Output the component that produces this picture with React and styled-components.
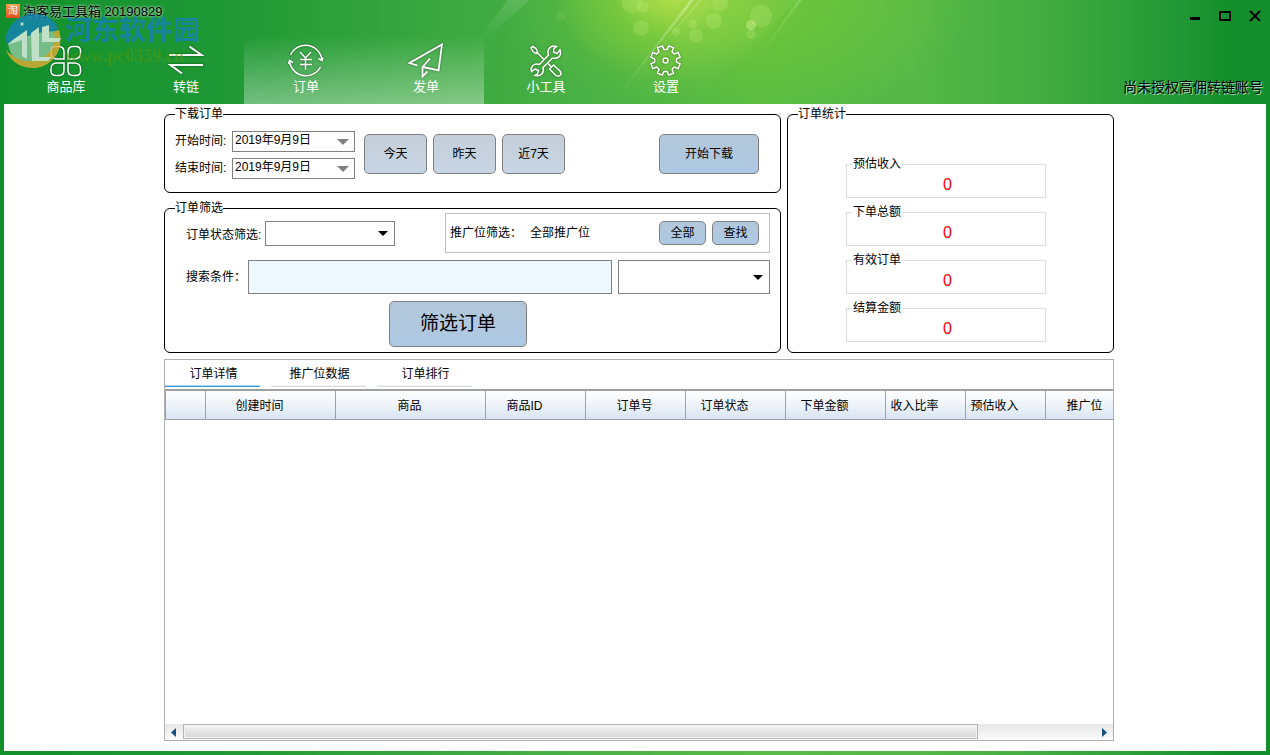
import React, { useState } from 'react';
import styled, { createGlobalStyle, css } from 'styled-components';

const GlobalStyle = createGlobalStyle`
  * {
    box-sizing: border-box;
  }
  body {
    margin: 0;
    color: #000;
    font: 12px/15px 'Liberation Sans', 'Noto Sans CJK SC', sans-serif;
  }
  button, input, select {
    margin: 0;
    font: inherit;
    color: inherit;
  }
`;

const Window = styled.div`
  display: flex;
  flex-direction: column;
  min-height: 100vh;
  padding-bottom: 4px;
  background: linear-gradient(
    90deg,
    #12902c 0%,
    #1e9834 17%,
    #3aa740 34%,
    #4ab146 46%,
    #58bb44 60%,
    #56b848 72%,
    #42ac40 82%,
    #279b38 91%,
    #128f2c 97%,
    #128f2c 100%
  );
`;

/* header */

const Header = styled.header`
  position: relative;
  background: radial-gradient(
      ellipse 120px 90px at 53% -8%,
      rgba(200, 230, 80, 0.85),
      rgba(150, 214, 60, 0.45) 50%,
      transparent
    ),
    radial-gradient(
      ellipse 240px 120px at 58% 0,
      rgba(125, 205, 50, 0.7),
      transparent
    );
`;
const Rays = styled.svg`
  position: absolute;
  inset: 0;
  width: 100%;
  height: 100%;
`;
const TitleBar = styled.div`
  position: relative;
  display: flex;
  justify-content: space-between;
  height: 36px;
  padding-left: 6px;
`;
const Title = styled.h1`
  display: flex;
  gap: 3px;
  height: 22px;
  margin: 0;
  align-items: center;
  font-size: 13px;
  font-weight: 400;
  text-shadow: 0 0 3px rgba(255, 255, 255, 0.6), 0 0 3px rgba(255, 255, 255, 0.6);
`;
const AppIcon = styled.span`
  display: grid;
  place-items: center;
  width: 14px;
  height: 14px;
  background: linear-gradient(#f0a050, #e0501c);
  color: #fff;
  font-size: 10px;
  line-height: 14px;
  text-shadow: none;
`;
const Controls = styled.div`
  display: flex;
`;
const ControlButton = styled.button`
  display: grid;
  place-items: center;
  width: 30px;
  height: 32px;
  padding: 0;
  border: 0;
  background: none;
`;
const Toolbar = styled.div`
  position: relative;
  display: flex;
  align-items: flex-end;
  justify-content: space-between;
  padding: 0 7px 0 4px;
`;
const Nav = styled.nav`
  display: flex;
`;
const NavItem = styled.button`
  display: flex;
  flex-direction: column;
  align-items: center;
  width: 120px;
  height: 68px;
  padding: 6px 0 0 4px;
  border: 0;
  background: ${(props) =>
    props.$active
      ? 'linear-gradient(rgba(255, 255, 255, 0), rgba(255, 255, 255, 0.36))'
      : 'none'};
  color: #fff;
  font-size: 13px;
  line-height: 18px;
`;
const NavIcon = styled.svg`
  width: 36px;
  height: 36px;
  flex: none;
  fill: none;
  stroke: #fff;
  stroke-width: 1.5;
  filter: drop-shadow(0 0 1px rgba(0, 0, 0, 0.45));
`;
const Account = styled.p`
  margin: 0 0 8px;
  font-size: 14px;
  line-height: 18px;
  text-shadow: 1px 1px 0 rgba(255, 255, 255, 0.6);
`;

const Watermark = styled.div`
  position: absolute;
  top: 13px;
  left: 4px;
  display: flex;
  gap: 2px;
  pointer-events: none;
`;
const WatermarkLogo = styled.svg`
  width: 59px;
  height: 56px;
  opacity: 0.8;
`;
const WatermarkText = styled.div`
  padding-top: 4px;
  color: #1580c0;
  font-size: 27px;
  font-weight: 700;
  line-height: 28px;
  opacity: 0.75;
`;
const WatermarkUrl = styled.div`
  padding-top: 2px;
  color: #4f9a10;
  font: 700 18px/18px 'Liberation Serif', serif;
  opacity: 0.55;
`;

/* content */

const Content = styled.main`
  flex: 1;
  display: flex;
  flex-direction: column;
  align-items: center;
  margin: 0 4px;
  padding: 3px 0 10px 8px;
  background: #fff;
`;
const Page = styled.div`
  flex: 1;
  display: flex;
  flex-direction: column;
  gap: 6px;
  width: 100%;
  max-width: 950px;
`;
const Top = styled.div`
  display: grid;
  grid-template-columns: 617fr 327fr;
  gap: 6px;
`;
const Stack = styled.div`
  display: flex;
  flex-direction: column;
  gap: 8px;
`;
const Group = styled.fieldset`
  min-width: 0;
  margin: 0;
  padding: 0;
  border: 1px solid #000;
  border-radius: 6px;
`;
const Legend = styled.legend`
  margin-left: 10px;
  padding: 0;
  line-height: 15px;
`;

const buttonTones = {
  plain: 'linear-gradient(#c4ced9, #c8d5e4)',
  blue: 'linear-gradient(#b3c7d9, #adc9e4)',
};
const Button = styled.button`
  width: ${(props) => props.$width}px;
  height: ${(props) => props.$height || 40}px;
  padding: 0;
  border: 1px solid #808080;
  border-radius: 5px;
  background: ${(props) => buttonTones[props.$tone || 'blue']};
  font-size: ${(props) => (props.$large ? 19 : 12)}px;
  line-height: 22px;
`;

const DownloadBody = styled.div`
  display: flex;
  gap: 9px;
  padding: 9px 21px 13px 10px;
`;
const Dates = styled.div`
  display: grid;
  grid-template-columns: 57px 123px;
  row-gap: 6px;
  line-height: 21px;
`;
const ButtonRow = styled.div`
  flex: 1;
  display: flex;
  gap: 6px;
  padding-top: 3px;
  & > :last-child {
    margin-left: auto;
  }
`;
const DateBox = styled.div`
  display: flex;
  height: 21px;
  border: 1px solid #808080;
`;
const DateInput = styled.input`
  flex: 1;
  min-width: 0;
  padding: 0 0 2px 2px;
  border: 0;
  outline: 0;
`;
const DateButton = styled.button`
  display: grid;
  place-items: center;
  width: 23px;
  padding: 0;
  border: 0;
  background: none;
`;

const FilterBody = styled.div`
  display: flex;
  flex-direction: column;
  gap: 7px;
  margin-top: -3px;
  padding: 0 10px 5px 21px;
`;
const FilterRow = styled.div`
  display: flex;
  align-items: center;
`;
const SubmitRow = styled.div`
  display: flex;
  justify-content: center;
  padding-right: 40px;
`;
const StatusLabel = styled.label`
  width: 79px;
  padding-top: 4px;
  white-space: nowrap;
`;
const SearchLabel = styled.label`
  width: 62px;
`;
const SelectBox = styled.div`
  position: relative;
  width: ${(props) => props.$width}px;
  height: ${(props) => props.$height}px;
  &::after {
    content: '';
    position: absolute;
    top: 50%;
    right: 7px;
    margin-top: -2px;
    border: 5px solid transparent;
    border-top-color: #000;
    border-bottom: 0;
    pointer-events: none;
  }
`;
const Select = styled.select`
  width: 100%;
  height: 100%;
  padding: 0 20px 0 4px;
  border: 1px solid #808080;
  border-radius: 0;
  appearance: none;
  background: #fff;
`;
const PromoBox = styled.div`
  display: flex;
  align-items: center;
  gap: 6px;
  width: 325px;
  height: 40px;
  margin-left: auto;
  padding: 0 10px 0 4px;
  border: 1px solid #c0c0c0;
`;
const PromoValue = styled.output`
  flex: 1;
  margin-left: 2px;
`;
const SearchInput = styled.input`
  flex: 1;
  min-width: 0;
  height: 34px;
  margin-right: 6px;
  padding: 0 4px;
  border: 1px solid #808080;
  background: #f0f8ff;
`;

const StatList = styled.div`
  display: grid;
  justify-content: center;
  grid-template-columns: minmax(0, 200px);
  row-gap: 7px;
  padding: 35px 9px 0 0;
`;
const StatBox = styled.fieldset`
  min-width: 0;
  height: 41px;
  margin: 0;
  padding: 0;
  border: 1px solid #dcdcdc;
`;
const StatLegend = styled.legend`
  margin-left: 5px;
  padding: 0 1px;
  line-height: 15px;
`;
const StatValue = styled.output`
  display: block;
  padding-left: 3px;
  color: #f00;
  font-size: 16px;
  line-height: 26px;
  text-align: center;
`;

/* order table */

const Orders = styled.section`
  flex: 1;
  display: flex;
  flex-direction: column;
  min-height: 200px;
  border: 1px solid #b0b0b0;
`;
const Tabs = styled.div`
  display: flex;
  gap: 11px;
  height: 29px;
`;
const Tab = styled.button`
  width: 95px;
  height: 27px;
  padding: 2px 0 0 2px;
  border: 0;
  border-bottom: 1px solid #d8e0e4;
  background: none;
  box-shadow: inset 0 -1px #eef2f4;
  ${(props) =>
    props.$active &&
    css`
      border-color: #3c98dc;
      box-shadow: inset 0 -1px #b4d8f0;
    `}
`;
const TableScroll = styled.div`
  flex: 1;
  overflow: hidden;
  border-top: 2px solid #a0a0a0;
`;
const Table = styled.table`
  width: 961px;
  table-layout: fixed;
  border-collapse: separate;
  border-spacing: 0;
`;
const Th = styled.th`
  width: ${(props) => props.$width}px;
  height: 29px;
  padding: 2px ${(props) => (props.$sortable ? 22 : 2)}px 0 0;
  border: solid #a0a0a0;
  border-width: 0 1px 1px 0;
  background: linear-gradient(#fff, #eef3f9 50%, #d8e4f2);
  font-weight: 400;
  white-space: nowrap;
  &:first-child {
    border-left-width: 1px;
  }
`;
const ScrollBar = styled.div`
  display: flex;
  height: 16px;
  background: linear-gradient(#e6e6e6, #fcfcfc);
`;
const ScrollButton = styled.button`
  display: grid;
  place-items: center;
  width: 17px;
  padding: 0;
  border: 0;
  background: none;
`;
const ScrollTrack = styled.div`
  flex: 1;
`;
const ScrollThumb = styled.div`
  width: 87%;
  height: 15px;
  margin-left: 1px;
  border: 1px solid #b4b4b4;
  background: linear-gradient(#f4f4f4, #d6d6d6);
  box-shadow: inset 0 0 0 1px #f4f4f4;
`;

const gear = (() => {
  const points = [];
  for (let i = 0; i < 8; i++) {
    [
      [-14, 11],
      [-10, 15],
      [10, 15],
      [14, 11],
    ].forEach(([offset, r]) => {
      const a = ((i * 45 + 22.5 + offset) * Math.PI) / 180;
      points.push(
        `${(17.5 + r * Math.cos(a)).toFixed(1)} ${(18.5 + r * Math.sin(a)).toFixed(1)}`
      );
    });
  }
  return `M${points.join('L')}Z`;
})();

const icons = {
  goods: (
    <>
      <path d='M7 4.5H10.5Q16 4.5 16 10V17H9Q3 17 3 11V9Q3 4.5 7 4.5Z' />
      <path d='M25 4.5H28Q32.5 4.5 32.5 9V11Q32.5 17 26 17H20V10Q20 4.5 25 4.5Z' />
      <path d='M9 21H16V28Q16 33.5 11 33.5H8Q3 33.5 3 29V27Q3 21 9 21Z' />
      <path d='M20 21H26Q32.5 21 32.5 27V29Q32.5 33.5 28 33.5H25Q20 33.5 20 28Z' />
    </>
  ),
  link: (
    <path strokeWidth='2' d='M1 13H33.5L21.5 4.5M35 23H2.5L14 31.5' />
  ),
  order: (
    <>
      <path d='M2.5 13A16.5 16.5 0 0 1 34 18.5M30.5 16.5L34 18.5L35 15.5' />
      <path d='M32.5 25A16.5 16.5 0 0 1 1.5 19M0.5 22L1.5 18.5L5 20.5' />
      <path d='M12 10L17.5 16L23 10M12 17.5H24M12 22.5H24M17.5 16V27.5' />
    </>
  ),
  send: (
    <>
      <path strokeWidth='1.8' d='M9.500 23.500L1.500 21L34 2.500L30.500 28.500L15 25' />
      <path strokeWidth='1.800' d='M22 16.500L14.500 25V34.500L19.500 29.500' />
    </>
  ),
  tools: (
    <>
      <path d='M28.5 4.5C22.500 2.500 18.500 7.500 20.500 13L11.500 22.500C6 20.500 2 25 3.500 29.500L7 27L10.500 28.500L9.500 32L7 33.500C13 35 16.500 30.500 15 25.500L24.500 16C30 17.500 34 13.500 32 8L29 11.500L25.500 10L26 6.500Z' />
      <path d='M4.5 4.5L8 6.500L9.500 10L8 11.500L5 9.500L3 6ZM9 10.500L16 17.500M20 21.500L23 24.500' />
      <path d='M21.5 27L25.500 23L32 29Q34 32 32 33.500Q30 35 27.500 33Z' />
    </>
  ),
  settings: (
    <>
      <path strokeLinejoin='round' d={gear} />
      <circle cx='17.5' cy='18.5' r='2.5' />
    </>
  ),
};

const navItems = [
  { id: 'goods', label: '商品库' },
  { id: 'link', label: '转链' },
  { id: 'order', label: '订单', active: true },
  { id: 'send', label: '发单', active: true },
  { id: 'tools', label: '小工具' },
  { id: 'settings', label: '设置' },
];

const columns = [
  { label: '', width: 41 },
  { label: '创建时间', width: 130, sortable: true },
  { label: '商品', width: 150 },
  { label: '商品ID', width: 100, sortable: true },
  { label: '订单号', width: 100 },
  { label: '订单状态', width: 100, sortable: true },
  { label: '下单金额', width: 100, sortable: true },
  { label: '收入比率', width: 80, sortable: true },
  { label: '预估收入', width: 80, sortable: true },
  { label: '推广位', width: 80 },
];

const stats = ['预估收入', '下单总额', '有效订单', '结算金额'];
const tabs = ['订单详情', '推广位数据', '订单排行'];

const HeaderLight = () => (
  <Rays viewBox='0 0 1270 104' preserveAspectRatio='xMidYMin slice' aria-hidden='true'>
    <defs>
      <linearGradient id='ray' x1='0' y1='0' x2='0' y2='1'>
        <stop offset='0' stopColor='#fff' stopOpacity='0.3' />
        <stop offset='1' stopColor='#fff' stopOpacity='0' />
      </linearGradient>
    </defs>
    <g fill='url(#ray)'>
      <path d='M690 0H694L625 88L614 100Z' />
      <path d='M699 0H702L632 80Z' opacity='0.6' />
      <path d='M798 0H802L745 76Z' opacity='0.5' />
      <path d='M508 0H530L484 40V32Z' opacity='0.4' />
      <path d='M704 0H798L690 104H610Z' opacity='0.15' />
    </g>
    <g fill='#e4ffa0' fillOpacity='0.16'>
      <circle cx='641' cy='28' r='8' />
      <circle cx='720' cy='3' r='8' />
      <circle cx='714' cy='21' r='8' />
      <circle cx='693' cy='24' r='4' />
      <circle cx='696' cy='36' r='7' />
      <circle cx='761' cy='16' r='11' />
      <circle cx='751' cy='25' r='5' fillOpacity='0.35' />
      <circle cx='751' cy='34' r='5' />
      <circle cx='632' cy='3' r='10' />
      <circle cx='643' cy='7' r='6' />
      <circle cx='676' cy='32' r='4' />
      <circle cx='561' cy='16' r='5' fillOpacity='0.08' />
    </g>
  </Rays>
);

const SiteWatermark = () => (
  <Watermark>
    <WatermarkLogo viewBox='0 0 59 56' aria-hidden='true'>
      <ellipse cx='30' cy='28' rx='26' ry='26' fill='#8fc9a0' />
      <path fill='#1583b8' d='M1 28C3 12 15 1 31 1C42 1 50 7 54 14C40 14 16 20 1 28Z' />
      <path fill='#1583b8' d='M1 28Q20 16 52 14L54 18Q28 18 5 31Z' />
      <path fill='#e2ad35' d='M55 17C61 36 48 55 29 55C16 55 6 48 2 37C12 48 28 52 40 44C49 38 52 28 50 19Z' />
      <path fill='#eaf6ee' d='M10 26L23 17V46L18 43V27L3 32ZM27 20L35 14V44H48L44 48H28ZM38 14L45 12V25H57L55 29H38Z' />
      <path fill='#eaf6ee' d='M16 9l2 1 2-1-1 2 1 2-2-1-2 1 1-2z' />
    </WatermarkLogo>
    <div>
      <WatermarkText>河东软件园</WatermarkText>
      <WatermarkUrl>www.pc0359.cn</WatermarkUrl>
    </div>
  </Watermark>
);

const DateField = ({ id, label }) => {
  const [value, setValue] = useState('2019年9月9日');
  return (
    <>
      <label htmlFor={id}>{label}</label>
      <DateBox>
        <DateInput id={id} value={value} onChange={(e) => setValue(e.target.value)} />
        <DateButton type='button' aria-label='选择日期'>
          <svg width='12' height='6'>
            <path d='M0 0H12L6 6Z' fill='#808080' />
          </svg>
        </DateButton>
      </DateBox>
    </>
  );
};

const App = () => {
  const [tab, setTab] = useState(0);

  return (
    <Window>
      <GlobalStyle />
      <Header>
        <HeaderLight />
        <TitleBar>
          <Title>
            <AppIcon>淘</AppIcon>
            淘客易工具箱 20190829
          </Title>
          <Controls>
            <ControlButton aria-label='最小化'>
              <svg width='12' height='12'>
                <path d='M1 7H11V10H1Z' />
              </svg>
            </ControlButton>
            <ControlButton aria-label='最大化'>
              <svg width='12' height='12'>
                <path d='M1 2H11V10H1Z' fill='none' stroke='#000' strokeWidth='2' />
              </svg>
            </ControlButton>
            <ControlButton aria-label='关闭'>
              <svg width='12' height='12'>
                <path d='M1 1L11 11M11 1L1 11' stroke='#000' strokeWidth='2' />
              </svg>
            </ControlButton>
          </Controls>
        </TitleBar>
        <Toolbar>
          <Nav>
            {navItems.map((item) => (
              <NavItem key={item.id} type='button' $active={item.active}>
                <NavIcon viewBox='0 0 36 36'>{icons[item.id]}</NavIcon>
                {item.label}
              </NavItem>
            ))}
          </Nav>
          <Account>尚未授权高佣转链账号</Account>
        </Toolbar>
        <SiteWatermark />
      </Header>

      <Content>
        <Page>
          <Top>
            <Stack>
              <Group>
                <Legend>下载订单</Legend>
                <DownloadBody>
                  <Dates>
                    <DateField id='start' label='开始时间:' />
                    <DateField id='end' label='结束时间:' />
                  </Dates>
                  <ButtonRow>
                    <Button $width={63} $tone='plain'>今天</Button>
                    <Button $width={63} $tone='plain'>昨天</Button>
                    <Button $width={63} $tone='plain'>近7天</Button>
                    <Button $width={100}>开始下载</Button>
                  </ButtonRow>
                </DownloadBody>
              </Group>
              <Group>
                <Legend>订单筛选</Legend>
                <FilterBody>
                  <FilterRow>
                    <StatusLabel htmlFor='status'>订单状态筛选:</StatusLabel>
                    <SelectBox $width={130} $height={25}>
                      <Select id='status' />
                    </SelectBox>
                    <PromoBox>
                      <label htmlFor='promo'>推广位筛选：</label>
                      <PromoValue id='promo'>全部推广位</PromoValue>
                      <Button $width={47} $height={24}>全部</Button>
                      <Button $width={47} $height={24}>查找</Button>
                    </PromoBox>
                  </FilterRow>
                  <FilterRow>
                    <SearchLabel htmlFor='search'>搜索条件：</SearchLabel>
                    <SearchInput id='search' type='text' />
                    <SelectBox $width={152} $height={34}>
                      <Select aria-label='搜索类型' />
                    </SelectBox>
                  </FilterRow>
                  <SubmitRow>
                    <Button $width={138} $height={46} $large>
                      筛选订单
                    </Button>
                  </SubmitRow>
                </FilterBody>
              </Group>
            </Stack>
            <Group>
              <Legend>订单统计</Legend>
              <StatList>
                {stats.map((name) => (
                  <StatBox key={name}>
                    <StatLegend>{name}</StatLegend>
                    <StatValue>0</StatValue>
                  </StatBox>
                ))}
              </StatList>
            </Group>
          </Top>

          <Orders>
            <Tabs role='tablist'>
              {tabs.map((name, i) => (
                <Tab
                  key={name}
                  role='tab'
                  aria-selected={tab === i}
                  $active={tab === i}
                  onClick={() => setTab(i)}
                >
                  {name}
                </Tab>
              ))}
            </Tabs>
            <TableScroll>
              <Table>
                <thead>
                  <tr>
                    {columns.map((col) => (
                      <Th key={col.label} $width={col.width} $sortable={col.sortable}>
                        {col.label}
                      </Th>
                    ))}
                  </tr>
                </thead>
              </Table>
            </TableScroll>
            <ScrollBar>
              <ScrollButton aria-label='向左滚动'>
                <svg width='5' height='9'>
                  <path d='M5 0V9L0 4.5Z' fill='#185080' />
                </svg>
              </ScrollButton>
              <ScrollTrack>
                <ScrollThumb />
              </ScrollTrack>
              <ScrollButton aria-label='向右滚动'>
                <svg width='5' height='9'>
                  <path d='M0 0V9L5 4.5Z' fill='#185080' />
                </svg>
              </ScrollButton>
            </ScrollBar>
          </Orders>
        </Page>
      </Content>
    </Window>
  );
};

export default App;
